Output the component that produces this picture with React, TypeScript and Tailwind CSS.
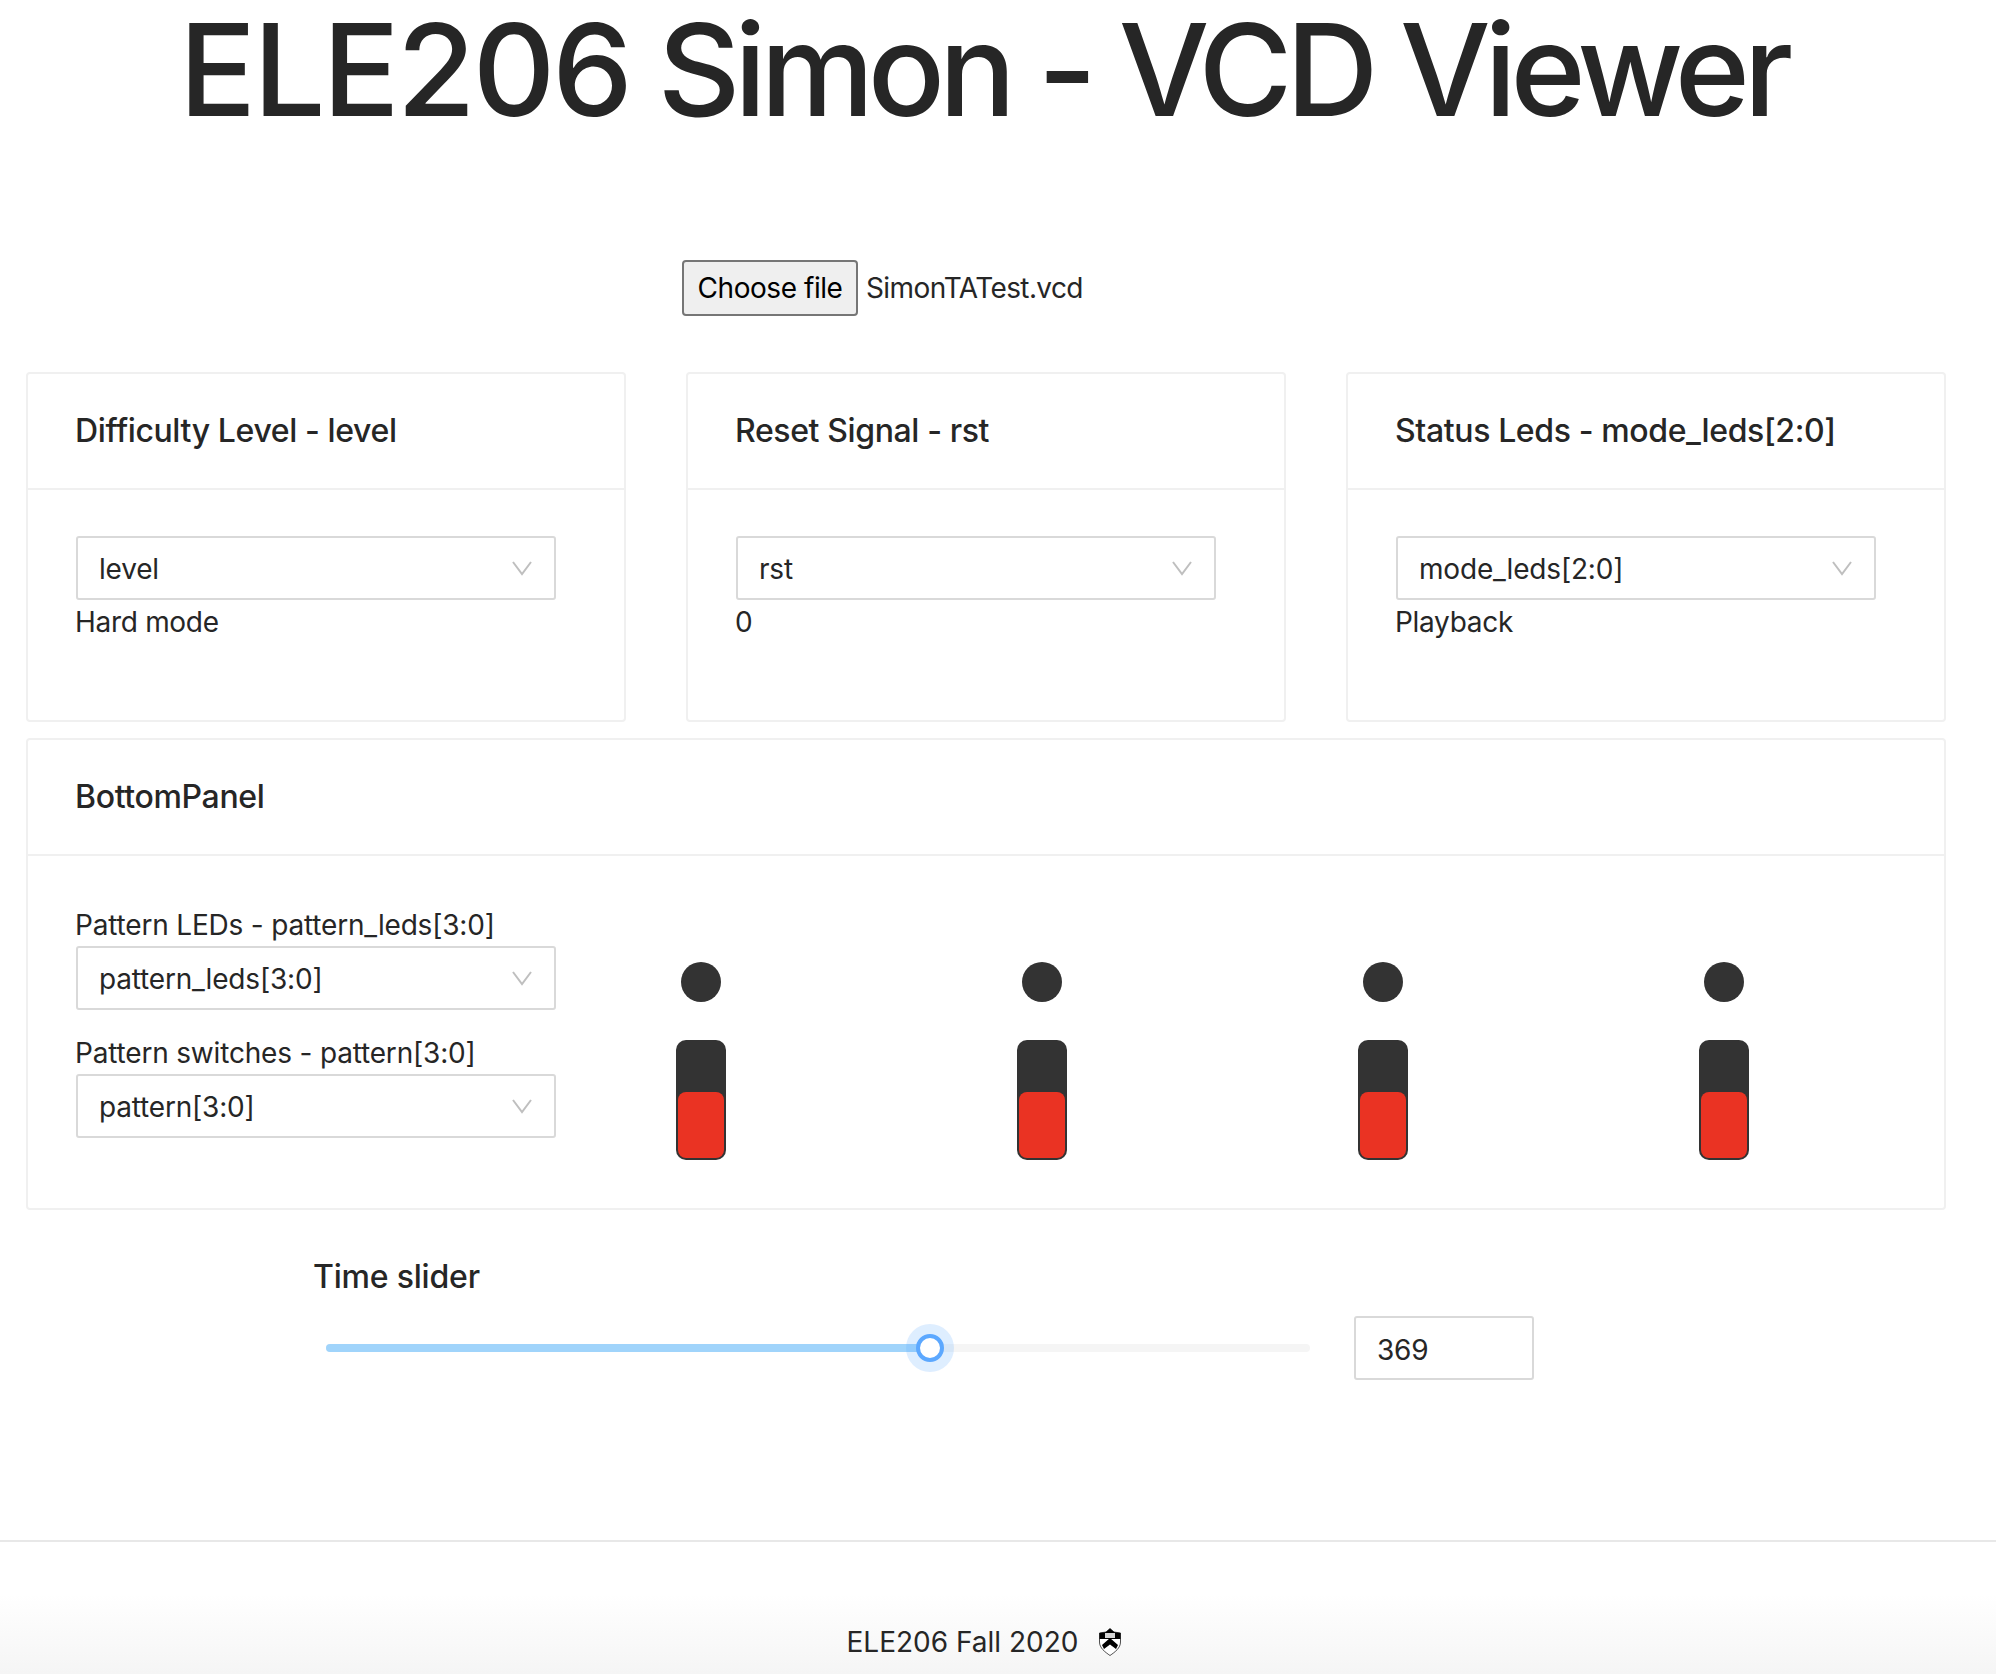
const SelectBox = ({value}: {value: string}) => (
    <div className="flex items-center justify-between w-[480px] h-[64px] border-2 border-[#d9d9d9] rounded-[3px] pl-[21px] pr-[21px]">
        <span className="pt-[1px]">{value}</span>
        <svg width="22" height="16" viewBox="0 0 22 16" fill="none" stroke="#bfbfbf" strokeWidth="2">
            <polyline points="2,2 11,14 20,2"/>
        </svg>
    </div>
)

const Card = ({title, value, text}: {title: string, value: string, text: string}) => (
    <div className="w-[600px] h-[350px] border-2 border-[#f0f0f0] rounded-[4px]">
        <div className="h-[116px] border-b-2 border-[#f0f0f0] flex items-center pl-[47px] text-[32px] font-medium tracking-[-0.38px]">
            {title}
        </div>
        <div className="pt-[46px] pl-[48px]">
            <SelectBox value={value}/>
            <div className="leading-[42px] mt-[1px] ml-[-1px] tracking-[-0.3px]">{text}</div>
        </div>
    </div>
)

const LedSwitch = () => (
    <div className="flex flex-col items-center w-[50px]">
        <div className="w-[40px] h-[40px] rounded-full bg-[#333333]"/>
        <div className="mt-[38px] w-[50px] h-[120px] rounded-[10px] bg-[#333333] flex items-end justify-center pb-[2px]">
            <div className="w-[46px] h-[66px] rounded-[8px] bg-[#ea3323]"/>
        </div>
    </div>
)

const Shield = () => (
    <svg width="22" height="28" viewBox="0 0 22 28">
        <path d="M0.5 5 L7 4 L11 0.5 L15 4 L21.5 5 V14 C21.5 20 16 24 11 27.5 C6 24 0.5 20 0.5 14 Z" fill="#fff" stroke="#222" strokeWidth="0.8"/>
        <path d="M0.5 5 L7 4 L11 0.5 L15 4 L21.5 5 V11 H0.5 Z" fill="#000"/>
        <rect x="6" y="5" width="10" height="5" fill="#d4d4d4"/>
        <path d="M3 17 L11 10 L19 17 L17 21 L11 16.5 L5 21 Z" fill="#000"/>
    </svg>
)

export default function App() {
    return (
        <div className="font-['Inter','Liberation_Sans',sans-serif] text-[28px] tracking-[-0.18px] text-[#262626] bg-white w-[1996px] h-[1674px] flex flex-col overflow-hidden">
            <h1 className="h-[140px] leading-[140px] text-[128px] font-medium tracking-[-6.2px] text-center w-[1966px] whitespace-nowrap">
                <span className="tracking-[-3px]">ELE206</span> Simon - <span className="tracking-[-6.3px]">VCD Viewer</span>
            </h1>

            <div className="mt-[120px] ml-[682px] h-[55px] flex items-center gap-[9px] tracking-[-0.45px]">
                <button className="h-[56px] w-[176px] bg-[#efefef] border-2 border-[#767676] rounded-[4px] text-black">
                    Choose file
                </button>
                <span className="ml-[-1px] tracking-[-0.6px]">SimonTATest.vcd</span>
            </div>

            <div className="mt-[57px] ml-[26px] flex gap-[60px]">
                <Card title="Difficulty Level - level" value="level" text="Hard mode"/>
                <Card title="Reset Signal - rst" value="rst" text="0"/>
                <Card title="Status Leds - mode_leds[2:0]" value="mode_leds[2:0]" text="Playback"/>
            </div>

            <div className="mt-[16px] ml-[26px] w-[1920px] h-[472px] border-2 border-[#f0f0f0] rounded-[4px]">
                <div className="h-[116px] border-b-2 border-[#f0f0f0] flex items-center pl-[47px] text-[32px] font-medium tracking-[-0.35px]">
                    BottomPanel
                </div>
                <div className="flex pl-[48px] pr-[50px]">
                    <div className="w-[454px] pt-[48px] shrink-0">
                        <div className="leading-[42px] ml-[-1px]">Pattern LEDs - pattern_leds[3:0]</div>
                        <SelectBox value="pattern_leds[3:0]"/>
                        <div className="leading-[42px] mt-[22px] ml-[-1px]">Pattern switches - pattern[3:0]</div>
                        <SelectBox value="pattern[3:0]"/>
                    </div>
                    <div className="flex-1 flex justify-around pt-[106px]">
                        <LedSwitch/>
                        <LedSwitch/>
                        <LedSwitch/>
                        <LedSwitch/>
                    </div>
                </div>
            </div>

            <div className="mt-[43px] ml-[313px] text-[32px] font-medium leading-[48px] tracking-[-0.2px]">Time slider</div>
            <div className="mt-[15px] ml-[326px] flex items-center gap-[44px]">
                <div className="relative w-[984px] h-[8px] rounded-full bg-[#f5f5f5]">
                    <div className="w-[604px] h-[8px] rounded-full bg-[#a0d4fb]"/>
                    <div className="absolute left-[580px] top-[-20px] w-[48px] h-[48px] rounded-full bg-[#5ca8ff]/20 flex items-center justify-center">
                        <div className="w-[28px] h-[28px] rounded-full bg-white border-[4px] border-[#5ca8ff]"/>
                    </div>
                </div>
                <div className="w-[180px] h-[64px] border-2 border-[#d9d9d9] rounded-[3px] flex items-center pl-[21px] pt-[3px]">369</div>
            </div>

            <div className="mt-auto h-[134px] border-t-2 border-[#e8e8e8] bg-gradient-to-b from-white from-40% to-[#f5f5f5] flex items-start justify-center pt-[84px]">
                <div className="flex items-center gap-[21px] ml-[-28px]">
                    <span className="text-[28px] leading-[32px] tracking-normal">ELE206 Fall 2020</span>
                    <Shield/>
                </div>
            </div>
        </div>
    )
}
